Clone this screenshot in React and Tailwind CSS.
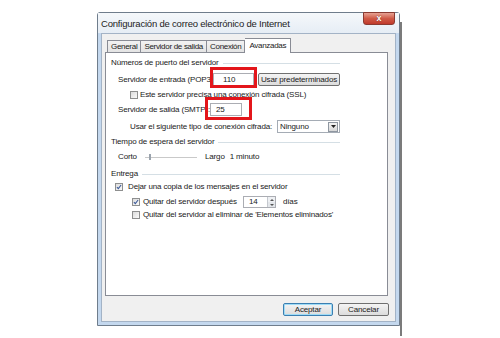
import React from 'react';

const ui = "font-['Liberation_Sans',Arial,sans-serif] text-[8px] tracking-[-0.15px] text-[#1a1a1a]";

function Check({ checked }) {
  return (
    <span className="w-[8px] h-[8px] shrink-0 border border-[#8e8f8f] bg-linear-to-br from-[#dcdcdc] to-[#fafafa] flex items-center justify-center">
      {checked && (
        <svg width="8" height="8" viewBox="0 0 8 8">
          <path d="M1.2 4.2 L3.1 6.2 L6.8 1.4" fill="none" stroke="#3b5998" strokeWidth="1.4" />
        </svg>
      )}
    </span>
  );
}

function GroupHeader({ title, className = '' }) {
  return (
    <div className={`flex items-center h-[12px] w-[229px] ${className}`}>
      <span>{title}</span>
      <span className="flex-1 ml-[4px] border-t border-[#d5dfe5]" />
    </div>
  );
}

function Button({ children, primary }) {
  return (
    <div
      className={`h-[13px] flex items-center justify-center rounded-[2px] border bg-linear-to-b from-[#f4f4f4] to-[#dcdcdc] ${
        primary ? 'border-[#3c7fb1] shadow-[inset_0_0_0_1px_#9fdcf7] from-[#eaf6fd] to-[#bee6fd]' : 'border-[#707070]'
      }`}
    >
      {children}
    </div>
  );
}

export default function App() {
  return (
    <div className={`relative w-[500px] h-[338px] bg-white overflow-hidden ${ui}`}>
      <div className="flex pt-[12px] pl-[97px]">
        {/* window */}
        <div className="w-[303px] h-[314px] flex flex-col border border-[#6f7d8c] rounded-t-[3px] bg-[#c4d8ee]">
          {/* title bar */}
          <div className="h-[20px] flex items-start justify-between bg-linear-to-b from-[#f5f8fb] to-[#e6edf5] pl-[3px]">
            <span className="mt-[4px] text-[9.5px] tracking-[-0.2px] text-[#222]">
              Configuración de correo electrónico de Internet
            </span>
            <div className="-mt-px mr-[4px] w-[32px] h-[13px] rounded-b-[3px] border border-[#8a3a31] bg-linear-to-b from-[#e6a193] via-[#cf5a47] to-[#c0392b] flex items-center justify-center">
              <span className="text-white font-bold text-[9px] leading-none [text-shadow:0_0_1px_#5a1a12]">x</span>
            </div>
          </div>
          {/* client area */}
          <div className="flex-1 mx-[3px] mb-[3px] bg-[#f0f0f0] border border-[#a3b3c6] pl-[3px] pt-[3px] flex flex-col">
            {/* tabs */}
            <div className="flex items-end h-[15px] pl-[2px] tracking-[-0.3px]">
              <div className="h-[12px] px-[3px] flex items-center border border-b-0 border-[#898c95] bg-linear-to-b from-[#f2f2f2] to-[#e4e4e4]">General</div>
              <div className="h-[12px] px-[3px] flex items-center border border-b-0 border-l-0 border-[#898c95] bg-linear-to-b from-[#f2f2f2] to-[#e4e4e4]">Servidor de salida</div>
              <div className="h-[12px] px-[3px] flex items-center border border-b-0 border-l-0 border-[#898c95] bg-linear-to-b from-[#f2f2f2] to-[#e4e4e4]">Conexión</div>
              <div className="h-[15px] px-[4px] -mb-px relative z-10 flex items-center border border-b-0 border-l-0 border-[#898c95] bg-white">Avanzadas</div>
            </div>
            {/* panel */}
            <div className="w-[283px] h-[244px] border border-[#898c95] bg-white pl-[5px] pt-[4px] flex flex-col">
              <GroupHeader title="Números de puerto del servidor" />
              <div className="mt-[4px] h-[13px] flex items-center pl-[7px]">
                <span className="w-[95px] whitespace-nowrap">Servidor de entrada (POP3):</span>
                <div className="w-[41px] h-[13px] border border-[#abadb3] bg-white flex items-center pl-[9px]">110</div>
                <div className="ml-[4px] w-[82px]">
                  <Button>Usar predeterminados</Button>
                </div>
              </div>
              <div className="mt-[3px] h-[11px] flex items-center pl-[19px] gap-[2px]">
                <Check />
                <span className="whitespace-nowrap">Este servidor precisa una conexión cifrada (SSL)</span>
              </div>
              <div className="mt-[3px] h-[13px] flex items-center pl-[7px]">
                <span className="w-[92px] whitespace-nowrap">Servidor de salida (SMTP):</span>
                <div className="w-[32px] h-[13px] border border-[#abadb3] bg-white flex items-center pl-[5px]">25</div>
              </div>
              <div className="mt-[4px] h-[13px] flex items-center pl-[19px]">
                <span className="w-[147px] whitespace-nowrap">Usar el siguiente tipo de conexión cifrada:</span>
                <div className="w-[63px] h-[13px] border border-[#a5acb5] bg-white flex items-center justify-between pl-[2px] pr-px">
                  <span>Ninguno</span>
                  <span className="w-[10px] h-[10px] border border-[#8f97a1] bg-linear-to-b from-[#f4f4f4] to-[#d8d8d8] flex items-center justify-center">
                    <svg width="5" height="3" viewBox="0 0 5 3"><path d="M0 0 H5 L2.5 3 Z" fill="#222" /></svg>
                  </span>
                </div>
              </div>
              <GroupHeader title="Tiempo de espera del servidor" className="mt-[3px]" />
              <div className="mt-[3px] h-[12px] flex items-center pl-[7px]">
                <span className="w-[27px]">Corto</span>
                <div className="relative w-[52px] h-[6px] flex items-center">
                  <span className="w-full border-t border-[#c9c9c9]" />
                  <span className="absolute left-[4px] top-0 w-[2px] h-[6px] bg-[#9aa3ad]" />
                </div>
                <span className="ml-[8px]">Largo</span>
                <span className="ml-[5px]">1 minuto</span>
              </div>
              <GroupHeader title="Entrega" className="mt-[5px]" />
              <div className="mt-px h-[12px] flex items-center pl-[4px] gap-[5px]">
                <Check checked />
                <span className="whitespace-nowrap">Dejar una copia de los mensajes en el servidor</span>
              </div>
              <div className="mt-[3px] h-[12px] flex items-center pl-[21px]">
                <Check checked />
                <span className="ml-[3px] w-[100px] whitespace-nowrap">Quitar del servidor después</span>
                <div className="w-[33px] h-[12px] border border-[#abadb3] bg-white flex items-center justify-between pl-[5px]">
                  <span>14</span>
                  <span className="w-[8px] h-full flex flex-col border-l border-[#c5c9cf]">
                    <span className="flex-1 flex items-center justify-center bg-[#eef0f3]">
                      <svg width="4" height="2" viewBox="0 0 4 2"><path d="M0 2 H4 L2 0 Z" fill="#555" /></svg>
                    </span>
                    <span className="flex-1 flex items-center justify-center bg-[#e3e6ea]">
                      <svg width="4" height="2" viewBox="0 0 4 2"><path d="M0 0 H4 L2 2 Z" fill="#555" /></svg>
                    </span>
                  </span>
                </div>
                <span className="ml-[7px]">días</span>
              </div>
              <div className="mt-px h-[12px] flex items-center pl-[21px] gap-[3px]">
                <Check />
                <span className="whitespace-nowrap">Quitar del servidor al eliminar de 'Elementos eliminados'</span>
              </div>
            </div>
            {/* buttons */}
            <div className="mt-[7px] flex justify-end gap-[5px] pr-[6px]">
              <div className="w-[50px]">
                <Button primary>Aceptar</Button>
              </div>
              <div className="w-[51px]">
                <Button>Cancelar</Button>
              </div>
            </div>
          </div>
        </div>
        <div className="w-[2px] h-[314px] bg-[#7b7b7b] mt-[10px]" />
      </div>
      {/* red annotation boxes */}
      <div className="absolute left-[210px] top-[67px] w-[47px] h-[21px] border-[3px] border-[#e3161b]" />
      <div className="absolute left-[205px] top-[97px] w-[47px] h-[23px] border-[3px] border-[#e3161b]" />
    </div>
  );
}
